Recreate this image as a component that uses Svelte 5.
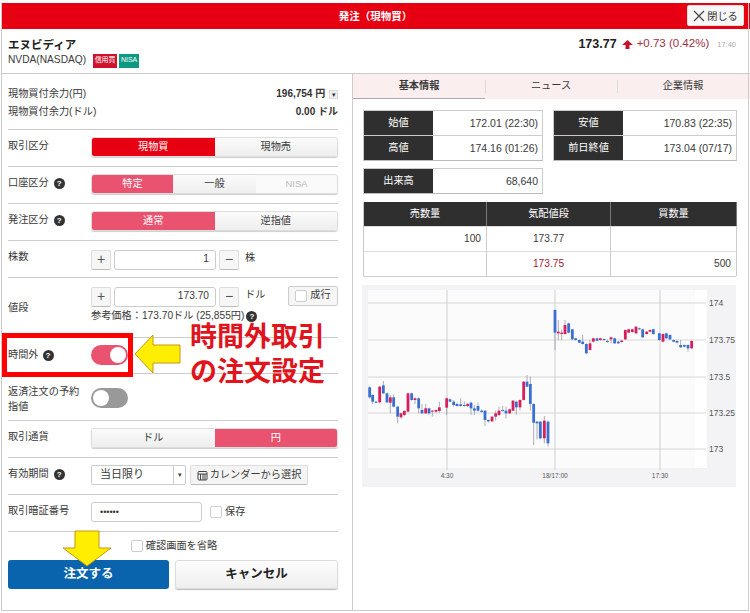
<script>
  const segA = [[44,322,352,318,356,'b'],[53,345,365,342,372,'b'],[63,365,368,363,370,'b'],[74,320,367,318,370,'r'],[85,316,340,303,342,'b'],[96,340,367,338,370,'b'],[106,352,368,345,400,'r'],[116,352,380,343,382,'b'],[128,380,410,378,430,'b'],[138,400,412,398,415,'r'],[148,393,405,390,408,'r'],[159,340,395,338,397,'r'],[170,340,360,338,362,'b'],[180,355,360,352,372,'r'],[191,355,385,352,400,'b'],[201,390,400,372,402,'b'],[212,385,400,372,402,'r'],[222,385,400,383,404,'b'],[232,392,395,390,410,'r'],[243,390,395,388,398,'r'],[253,382,393,365,398,'r'],[275,355,383,352,405,'r'],[285,358,365,355,367,'b'],[296,365,375,360,380,'b'],[306,372,378,368,380,'b'],[317,373,378,355,380,'b'],[328,375,378,365,380,'b'],[338,372,378,368,381,'r'],[348,368,385,365,405,'b'],[358,385,392,375,405,'b'],[369,378,392,368,395,'b'],[380,392,396,388,398,'b'],[390,392,420,390,438,'b'],[400,420,424,418,428,'b'],[411,410,424,408,426,'r'],[422,400,410,392,422,'r'],[432,392,405,380,408,'r'],[443,390,392,378,395,'b'],[453,392,400,380,415,'b'],[464,388,400,386,402,'r'],[474,362,392,360,394,'r'],[484,365,382,362,404,'b'],[495,360,382,358,392,'r'],[506,305,360,303,362,'r'],[516,305,320,285,322,'b'],[526,312,372,290,392,'b'],[536,372,428,370,495,'b'],[546,425,430,423,478,'b'],[556,425,475,423,478,'b'],[568,422,475,408,490,'r'],[579,425,490,422,500,'b']];
  const segB = [[15,90,158,88,210,'b'],[25,155,160,120,180,'r'],[35,158,162,148,180,'r'],[45,135,162,120,164,'r'],[56,130,158,128,160,'b'],[67,148,178,146,180,'b'],[77,175,180,173,182,'b'],[88,180,188,178,190,'b'],[98,185,192,165,194,'b'],[109,192,220,190,222,'b'],[120,190,210,180,212,'r'],[130,175,185,173,187,'r'],[141,175,182,173,184,'b'],[151,175,180,173,182,'r'],[162,177,180,175,182,'b'],[172,183,186,178,188,'b'],[183,172,178,170,190,'r'],[194,175,190,173,192,'b'],[205,185,190,183,192,'b'],[215,182,186,180,188,'r'],[226,150,178,148,180,'r'],[236,148,158,146,160,'r'],[247,148,156,146,158,'r'],[258,140,160,138,162,'r'],[268,145,148,143,150,'b'],[278,148,172,146,174,'b'],[290,155,162,153,164,'r'],[300,150,155,148,157,'r'],[310,148,162,146,164,'b'],[328,160,180,158,182,'b'],[339,162,185,160,187,'r'],[349,160,175,158,177,'b'],[360,165,178,163,180,'b'],[371,180,185,178,187,'b'],[381,183,188,181,190,'b'],[392,195,202,180,204,'b'],[403,195,200,193,202,'b'],[414,195,205,193,215,'b'],[425,183,205,181,207,'r']];
  const toScreen = (seg, ox) => seg.map(([x, t, b, wt, wb, c]) => ({ x: x / 3 + ox, t: t / 3 + 280, h: Math.max(1, (b - t) / 3), wt: wt / 3 + 280, wb: wb / 3 + 280, c: c === 'r' ? '#d81e5b' : '#3a6fd0' }));
  const candles = [...toScreen(segA, 355), ...toScreen(segB, 550)];
  const grid = [[303, '174'], [340, '173.75'], [377, '173.5'], [413, '173.25'], [449, '173']];
  const vert = [[447, '4:30'], [555, '18/17:00'], [660, '17:30']];
</script>

<div class="frame">
  <header class="title">
    <span>発注（現物買）</span>
    <button class="close">
      <svg width="12" height="12" viewBox="0 0 12 12" fill="none" stroke="#444" stroke-width="1.2"><path d="M1 1 11 11M11 1 1 11"/></svg>
      閉じる
    </button>
  </header>

  <section class="stock">
    <div>
      <div class="name">エヌビディア</div>
      <div class="code">NVDA(NASDAQ)<span class="badge red">信用買</span><span class="badge teal">NISA</span></div>
    </div>
    <div class="quote">
      <b>173.77</b>
      <svg width="11" height="9" viewBox="0 0 12 10"><path d="M6 0 12 5.5H8.2V10H3.8V5.5H0Z" fill="#c8102e"/></svg>
      <span class="chg">+0.73 (0.42%)</span>
      <span class="time">17:40</span>
    </div>
  </section>

  <main class="body">
    <form class="left">
      <div class="row balance">
        <div class="bal"><span>現物買付余力(円)</span><b>196,754 円 <i class="mini">▾</i></b></div>
        <div class="bal"><span>現物買付余力(ドル)</span><b>0.00 ドル</b></div>
      </div>
      <div class="row">
        <div class="label">取引区分</div>
        <div class="seg"><span class="on-strong">現物買</span><span>現物売</span></div>
      </div>
      <div class="row">
        <div class="label">口座区分 <i class="help">?</i></div>
        <div class="seg three"><span class="on">特定</span><span>一般</span><span class="dis">NISA</span></div>
      </div>
      <div class="row">
        <div class="label">発注区分 <i class="help">?</i></div>
        <div class="seg"><span class="on">通常</span><span>逆指値</span></div>
      </div>
      <div class="row">
        <div class="label">株数</div>
        <div class="stepper"><span class="pm">+</span><span class="num">1</span><span class="pm">−</span><span class="unit">株</span></div>
      </div>
      <div class="row price">
        <div class="label">値段</div>
        <div class="pricebox">
          <div class="stepper">
            <span class="pm">+</span><span class="num">173.70</span><span class="pm">−</span><span class="unit">ドル</span>
            <span class="market"><i class="cb"></i>成行</span>
          </div>
          <div class="ref">参考価格：173.70ドル (25,855円) <i class="help">?</i></div>
        </div>
      </div>
      <div class="row after">
        <div class="label">時間外 <i class="help">?</i></div>
        <div class="toggle active"><i></i></div>
      </div>
      <div class="row rebook">
        <div class="label wrap">返済注文の予約指値</div>
        <div class="toggle"><i></i></div>
      </div>
      <div class="row">
        <div class="label">取引通貨</div>
        <div class="seg"><span>ドル</span><span class="on">円</span></div>
      </div>
      <div class="row">
        <div class="label">有効期間 <i class="help">?</i></div>
        <div class="period">
          <span class="select"><span>当日限り</span><i>▾</i></span>
          <span class="cal">
            <svg width="11" height="11" viewBox="0 0 11 11" fill="none" stroke="#444"><rect x="1" y="1.5" width="9" height="8.5" rx="1"/><path d="M1 4h9M3.5 4v6M6 4v6M8 4v6"/></svg>
            カレンダーから選択
          </span>
        </div>
      </div>
      <div class="row">
        <div class="label">取引暗証番号</div>
        <div class="pin"><span class="pinbox">••••••</span><i class="cb"></i><span>保存</span></div>
      </div>
      <div class="confirm"><i class="cb"></i>確認画面を省略</div>
      <div class="actions">
        <span class="submit">注文する</span>
        <span class="cancel">キャンセル</span>
      </div>
    </form>

    <aside class="right">
      <nav class="tabs">
        <span class="tab cur">基本情報</span>
        <span class="tab">ニュース</span>
        <span class="tab">企業情報</span>
      </nav>
      <div class="info">
        <div class="pair">
          <div class="kv"><span class="k">始値</span><span class="v">172.01 (22:30)</span></div>
          <div class="kv"><span class="k">高値</span><span class="v">174.16 (01:26)</span></div>
        </div>
        <div class="pair wide">
          <div class="kv"><span class="k">安値</span><span class="v">170.83 (22:35)</span></div>
          <div class="kv"><span class="k">前日終値</span><span class="v">173.04 (07/17)</span></div>
        </div>
        <div class="pair">
          <div class="kv"><span class="k">出来高</span><span class="v">68,640</span></div>
        </div>
      </div>
      <div class="book">
        <div class="bh">売数量</div><div class="bh">気配値段</div><div class="bh">買数量</div>
        <div class="bc end">100</div><div class="bc mid">173.77</div><div class="bc"></div>
        <div class="bc"></div><div class="bc mid redt">173.75</div><div class="bc end">500</div>
      </div>
    </aside>
  </main>

  <svg class="chart" width="750" height="613" viewBox="0 0 750 613">
    <rect x="362" y="285" width="374" height="202" fill="#f3f3f5"/>
    <rect x="368" y="290" width="327" height="178" fill="#fbfbfc"/>
    <rect x="695" y="290" width="12" height="178" fill="#fff"/>
    {#each grid as [y, t]}
      <line x1="368" x2="706" y1={y} y2={y} stroke="#d6d6d6"/>
      <text x="709" y={y + 3} class="ct">{t}</text>
    {/each}
    {#each vert as [x, t]}
      <line x1={x} x2={x} y1="290" y2="470" stroke="#cfcfcf"/>
      <text x={x} y="478" text-anchor="middle" class="ct small">{t}</text>
    {/each}
    {#each candles as c}
      <line x1={c.x} x2={c.x} y1={c.wt} y2={c.wb} stroke="#8d8d9c" stroke-width="0.7"/>
      <rect x={c.x - 1.4} y={c.t} width="2.8" height={c.h} fill={c.c}/>
    {/each}
  </svg>

  <div class="mark"></div>
  <svg class="arrow-left" width="50" height="42" viewBox="0 0 50 42">
    <path d="M2 21 20 2V12H47V30H20V40Z" fill="#ffee00" stroke="#c8961a"/>
  </svg>
  <div class="note">時間外取引<br />の注文設定</div>
  <svg class="arrow-down" width="50" height="38" viewBox="0 0 50 38">
    <path d="M13 1H37V18H49L25 36 1 18H13Z" fill="#ffee00" stroke="#c8961a"/>
  </svg>
</div>

<style>
  :global(body) { margin: 0; background: #fff; }
  * { box-sizing: border-box; }
  .frame {
    position: relative; width: 750px; height: 613px; overflow: hidden; background: #fff; color: #3a3a3a;
    padding: 3px 0 0 1px;
    font: 10.2px/1.2 "Liberation Sans", "Noto Sans CJK JP", sans-serif;
  }
  .frame::after { content: ""; position: absolute; left: 1px; right: 1px; top: 3px; bottom: 2px; border: 1px solid #ccc; border-top: 0; pointer-events: none; }
  i { font-style: normal; }

  .title { height: 26px; background: #e60012; color: #fff; display: flex; align-items: center; justify-content: center; font-weight: 700; font-size: 10.5px; position: relative; }
  .close { position: absolute; right: 6px; top: 2px; width: 57px; height: 21px; border: 1px solid #ddd; border-radius: 2px; background: #f7f7f7; color: #333; font: 10.2px "Liberation Sans", "Noto Sans CJK JP", sans-serif; padding: 0; display: flex; align-items: center; justify-content: center; gap: 2px; }

  .stock { height: 45px; display: flex; justify-content: space-between; align-items: flex-start; padding: 9px 14px 0 7px; border-bottom: 1px solid #ccc; }
  .name { font-size: 11.5px; font-weight: 700; color: #222; line-height: 15px; }
  .code { font-size: 10.2px; display: flex; align-items: center; height: 15px; margin-top: 0; }
  .badge { color: #fff; font-size: 7px; height: 14px; display: inline-flex; align-items: center; justify-content: center; }
  .badge.red { background: #d0112b; width: 24px; margin-left: 7px; }
  .badge.teal { background: #0d9a82; width: 20px; margin-left: 2px; }
  .quote { display: flex; align-items: center; gap: 5px; margin-top: -1px; height: 14px; }
  .quote b { color: #222; font-size: 12.5px; }
  .chg { color: #a23045; font-size: 11.5px; margin-left: -1px; }
  .time { color: #aaa; font-size: 7.5px; margin-left: 3px; }

  .body { display: flex; height: 537px; }
  .left { width: 352px; padding: 0 14px 0 7px; border-right: 1px solid #ccc; flex: none; }
  .row { display: flex; align-items: flex-start; border-bottom: 1px solid #ccc; padding: 7px 0 0; height: 37px; }
  .balance { display: block; height: 56px; padding: 11px 0 0; }
  .bal { display: flex; justify-content: space-between; height: 18px; align-items: center; }
  .bal b { color: #333; font-size: 10px; }
  .mini { display: inline-block; width: 9px; height: 9px; font-size: 7px; line-height: 8px; text-align: center; background: #eee; border: 1px solid #ddd; font-weight: 400; margin-left: 1px; }
  .label { width: 83px; flex: none; line-height: 18px; display: flex; align-items: center; gap: 5px; white-space: nowrap; }
  .label.wrap { white-space: normal; line-height: 15px; padding: 3px 8px 0 0; display: block; }
  .help { width: 11px; height: 11px; border-radius: 50%; background: #333; color: #fff; font-size: 8px; line-height: 11px; text-align: center; font-weight: 700; flex: none; display: inline-block; }

  .seg { flex: 1; height: 20px; display: grid; grid-template-columns: 1fr 1fr; border: 1px solid #ddd; border-radius: 3px; overflow: hidden; box-shadow: 0 1px 1px #ccc; }
  .seg.three { grid-template-columns: 81px 83px 1fr; }
  .seg span { display: flex; align-items: center; justify-content: center; background: linear-gradient(#fbfbfb, #eee); }
  .seg .on { background: #e9536f; color: #fff; }
  .seg .on-strong { background: #e60012; color: #fff; }
  .seg .dis { color: #bbb; background: #fafafa; font-size: 9.5px; }

  .stepper { display: flex; align-items: center; gap: 3px; flex: 1; height: 21px; }
  .row:not(.price) .stepper { margin-top: 1px; }
  .pm { width: 20px; height: 20px; border: 1px solid #ddd; border-bottom-color: #bbb; border-radius: 2px; background: #f6f6f6; display: flex; align-items: center; justify-content: center; font-size: 14px; color: #555; }
  .num { width: 102px; height: 20px; border: 1px solid #ccc; border-radius: 3px; display: flex; align-items: center; justify-content: flex-end; padding-right: 6px; }
  .unit { margin-left: 3px; margin-top: -3px; }
  .price { height: 60px; align-items: center; padding: 8px 0 0; }
  .price .label { margin-top: -8px; }
  .pricebox { flex: 1; align-self: flex-start; }
  .market { margin-left: auto; width: 50px; height: 20px; border: 1px solid #ccc; border-radius: 2px; background: #f6f6f6; display: flex; align-items: center; justify-content: center; gap: 3px; margin-top: -2px; }
  .ref { margin-top: 3px; white-space: nowrap; display: flex; align-items: center; gap: 2px; }
  .cb { width: 12px; height: 12px; border: 1px solid #ccc; border-radius: 2px; background: #fff; display: inline-block; flex: none; }

  .after { height: 36px; padding-top: 7px; }
  .after .label { line-height: 20px; gap: 4px; }
  .rebook { height: 47px; padding: 7px 0 0; }
  .rebook .toggle { margin-top: 7px; }
  .toggle { width: 37px; height: 20px; border-radius: 10px; background: #999; padding: 2px; display: flex; }
  .toggle i { width: 16px; height: 16px; border-radius: 50%; background: #fff; }
  .toggle.active { background: #e9536f; justify-content: flex-end; }

  .period { display: flex; gap: 4px; }
  .select { width: 95px; height: 20px; border: 1px solid #ccc; border-radius: 2px; display: flex; justify-content: space-between; align-items: center; padding-left: 8px; font-size: 11px; }
  .select i { width: 12px; height: 100%; border-left: 1px solid #ccc; font-size: 7px; display: flex; align-items: center; justify-content: center; }
  .cal { width: 118px; height: 20px; border: 1px solid #ddd; border-bottom-color: #bbb; border-radius: 2px; background: #f4f4f4; display: flex; align-items: center; justify-content: center; gap: 2px; white-space: nowrap; }
  .pin { display: flex; align-items: center; height: 20px; gap: 3px; }
  .pinbox { width: 111px; height: 20px; border: 1px solid #ccc; border-radius: 3px; padding-left: 8px; font-size: 9px; line-height: 18px; margin-right: 5px; }

  .confirm { display: flex; align-items: center; justify-content: center; gap: 3px; height: 28px; padding-left: 2px; }
  .actions { display: flex; gap: 6px; }
  .actions span { flex: 1; height: 29px; border-radius: 3px; display: flex; align-items: center; justify-content: center; font-size: 12.5px; font-weight: 700; }
  .submit { background: #0a64ad; color: #fff; }
  .cancel { background: linear-gradient(#fdfdfd, #efefef); border: 1px solid #ddd; box-shadow: 0 1px 1px #bbb; color: #222; }

  .right { flex: 1; padding: 0; }
  .tabs { display: flex; height: 25px; background: #fbeeee; }
  .tab { width: 132px; display: flex; align-items: center; justify-content: center; position: relative; }
  .tab + .tab::before { content: ""; position: absolute; left: 0; top: 6px; bottom: 6px; width: 1px; background: #ddd; }
  .tab.cur { font-weight: 700; border-bottom: 1px solid #aaa; }

  .info { display: grid; grid-template-columns: 180px 184px; column-gap: 10px; row-gap: 7px; padding: 11px 0 0 10px; }
  .pair { border: 1px solid #ccc; border-bottom-color: #bbb; }
  .kv { display: flex; height: 24px; }
  .kv + .kv { height: 25px; border-top: 1px solid #ccc; }
  .k { width: 69px; background: #2f2f2f; color: #fff; display: flex; align-items: center; justify-content: center; flex: none; }
  .v { flex: 1; display: flex; align-items: center; justify-content: flex-end; padding-right: 4px; white-space: nowrap; font-size: 10.5px; }

  .book { margin: 8px 0 0 10px; width: 373px; display: grid; grid-template-columns: 123px 124px 126px; border-left: 1px solid #ccc; border-bottom: 1px solid #ccc; }
  .bh { background: #2f2f2f; color: #fff; height: 24px; display: flex; align-items: center; justify-content: center; border-right: 1px solid #777; }
  .bc { height: 25px; border-right: 1px solid #ccc; border-top: 1px solid #ddd; display: flex; align-items: center; }
  .end { justify-content: flex-end; padding-right: 5px; }
  .mid { justify-content: center; }
  .redt { color: #a32035; }

  .chart { position: absolute; left: 0; top: 0; pointer-events: none; }
  .ct { font: 8.5px "Liberation Sans", sans-serif; fill: #555; }
  .ct.small { font-size: 6.5px; }

  .mark { position: absolute; left: 2px; top: 333px; width: 131px; height: 44px; border: 5px solid #f00; }
  .arrow-left { position: absolute; left: 133px; top: 333px; }
  .arrow-down { position: absolute; left: 62px; top: 530px; }
  .note { position: absolute; left: 190px; top: 320px; font: 700 27px/35px "Liberation Sans", "Noto Sans CJK JP", sans-serif; color: #e0141c; white-space: nowrap; }
</style>
